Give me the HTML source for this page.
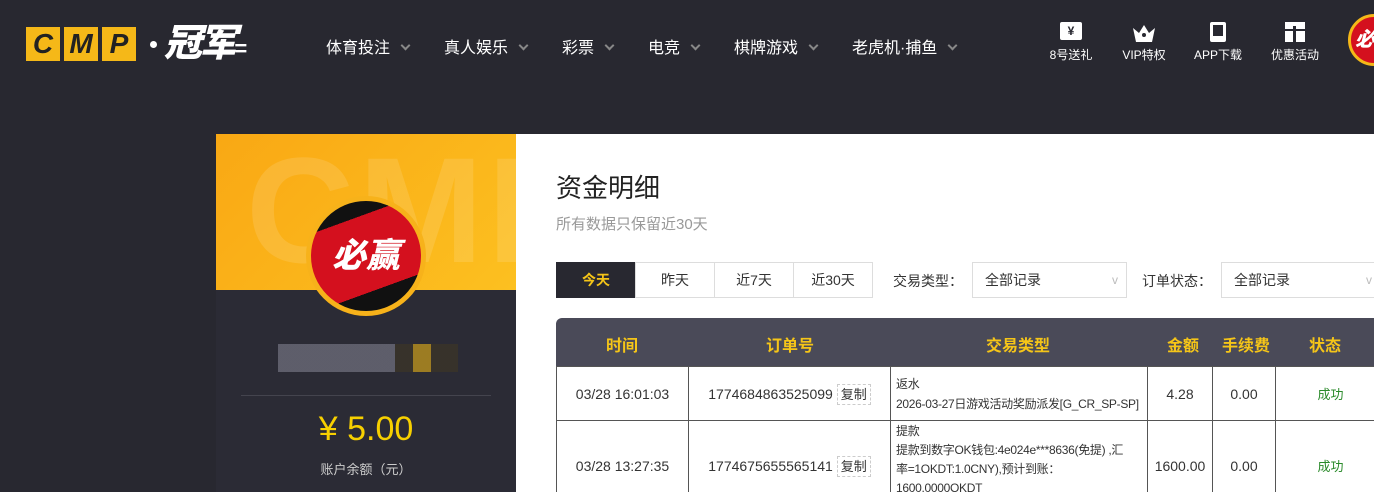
<!DOCTYPE html>
<html style="width:1374px;height:492px;overflow:hidden"><head><meta charset="utf-8"><style>
*{margin:0;padding:0;box-sizing:border-box}
body{width:1374px;height:492px;overflow:hidden;background:#282830;font-family:"Liberation Sans","Noto Sans CJK SC",sans-serif;position:relative}
.abs{position:absolute}
.nav{top:34px;color:#fff;font-size:16px}
.nav span{position:absolute;white-space:nowrap}
.nav span:after{content:"";display:inline-block;width:5px;height:5px;border-right:2px solid #888;border-bottom:2px solid #888;transform:rotate(45deg);margin-left:12px;position:relative;top:-4px}
.ic{color:#fff;font-size:12px;text-align:center;width:70px}
.logo b{display:inline-block;width:34px;height:34px;background:#f5b818;color:#222;font-style:italic;font-size:28px;font-weight:900;text-align:center;line-height:34px;margin-right:4px}
table{border-collapse:collapse;font-size:14px;color:#333;table-layout:fixed}
td{border:1px solid #555;text-align:center;overflow:hidden}
.tab{position:absolute;top:262px;height:36px;border:1px solid #ddd;font-size:14px;color:#333;text-align:center;line-height:34px}
.sel{position:absolute;top:262px;height:36px;border:1px solid #ddd;font-size:14px;color:#333;line-height:34px;padding-left:12px}
.sel:after{content:"v";position:absolute;right:8px;color:#bbb;font-size:12px}
.d{text-align:left;padding-left:5px;font-size:12px;letter-spacing:-0.3px;white-space:nowrap}
</style></head><body>
<div class="abs logo" style="left:26px;top:27px;height:34px">
<b>C</b><b>M</b><b>P</b>
</div>
<div class="abs" style="left:150px;top:41px;width:7px;height:7px;border-radius:50%;background:#fff"></div>
<div class="abs" style="left:164px;top:20px;color:#fff;font-size:38px;font-weight:900;font-style:italic;letter-spacing:-3px;line-height:48px">冠军<span style="font-size:22px">=</span></div>
<div class="abs nav" style="left:0;width:1000px">
<span style="left:326px">体育投注</span><span style="left:444px">真人娱乐</span><span style="left:562px">彩票</span><span style="left:648px">电竞</span><span style="left:734px">棋牌游戏</span><span style="left:852px">老虎机·捕鱼</span>
</div>
<div class="abs ic" style="left:1036px;top:22px"><div style="margin:0 auto 6px;width:22px;height:18px;background:#fff;border-radius:2px;color:#282830;font-size:12px;font-weight:bold;line-height:18px">¥</div>8号送礼</div>
<div class="abs ic" style="left:1109px;top:22px"><svg width="26" height="22" viewBox="0 0 26 22" style="display:block;margin:0 auto 2px"><path d="M2 6 L8 11 L13 3 L18 11 L24 6 L21 20 L5 20 Z" fill="#fff"/><circle cx="13" cy="13" r="2" fill="#282830"/></svg>VIP特权</div>
<div class="abs ic" style="left:1183px;top:22px"><div style="margin:0 auto 4px;width:16px;height:20px;border:3px solid #fff;border-bottom-width:6px;border-radius:2px"></div>APP下载</div>
<div class="abs ic" style="left:1260px;top:22px"><div style="margin:0 auto 4px;width:20px;height:20px;background:#fff;border-top:4px solid #fff;position:relative"><div style="position:absolute;left:8px;top:0;width:3px;height:20px;background:#282830"></div><div style="position:absolute;left:0;top:3px;width:20px;height:2px;background:#282830"></div></div>优惠活动</div>
<div class="abs" style="left:1348px;top:14px;width:52px;height:52px;border-radius:50%;background:#d4101e;border:3px solid #f5b818;color:#fff;font-weight:900;font-size:20px;line-height:46px;padding-left:4px;font-style:italic">必</div>

<div class="abs" style="left:216px;top:134px;width:300px;height:156px;background:linear-gradient(135deg,#f9a814,#fcc020);overflow:hidden"><div style="position:absolute;left:30px;top:-10px;font-size:150px;font-weight:bold;color:rgba(255,255,255,.12);letter-spacing:4px">CMP</div></div>
<div class="abs" style="left:216px;top:290px;width:300px;height:202px;background:#2b2b35"></div>
<div class="abs" style="left:306px;top:196px;width:120px;height:120px;border-radius:50%;background:#f7b21a;padding:5px"><div style="width:110px;height:110px;border-radius:50%;background:linear-gradient(160deg,#111 0 22%,#d4101e 22% 75%,#111 75%);color:#fff;font-size:34px;font-weight:900;font-style:italic;text-align:center;line-height:110px">必赢</div></div>
<div class="abs" style="left:278px;top:344px;width:180px;height:28px;background:linear-gradient(90deg,#6a6a78 0 65%,#3a3428 65% 75%,#b8901e 75% 85%,#3a3428 85%);opacity:.8"></div>
<div class="abs" style="left:241px;top:395px;width:250px;height:1px;background:#44444e"></div>
<div class="abs" style="left:216px;top:410px;width:300px;text-align:center;color:#f7d000;font-size:34px">¥ 5.00</div>
<div class="abs" style="left:216px;top:459px;width:300px;text-align:center;color:#ccc;font-size:13px">账户余额（元）</div>

<div class="abs" style="left:516px;top:134px;width:858px;height:358px;background:#fff;overflow:hidden">
<div class="abs" style="left:40px;top:34px;font-size:26px;color:#222">资金明细</div>
<div class="abs" style="left:40px;top:79px;font-size:15px;color:#999">所有数据只保留近30天</div>
<div class="abs" style="left:40px;top:184px;width:830px;height:48px;background:#4a4a58;border-radius:6px 6px 0 0"></div>
<div class="abs" style="left:40px;top:198px;width:830px;color:#f5c518;font-weight:bold;font-size:16px;height:20px">
<span class="abs" style="left:50px">时间</span><span class="abs" style="left:210px">订单号</span><span class="abs" style="left:430px">交易类型</span><span class="abs" style="left:611px">金额</span><span class="abs" style="left:666px">手续费</span><span class="abs" style="left:753px">状态</span></div>
<table class="abs" style="left:40px;top:232px;width:830px">
<tr style="height:54px"><td style="width:132px">03/28 16:01:03</td><td style="width:202px">1774684863525099 <span style="border:1px dashed #ccc;padding:2px 3px;font-size:13px">复制</span></td><td class="d" style="width:257px;line-height:20px">返水<br>2026-03-27日游戏活动奖励派发[G_CR_SP-SP]</td><td style="width:65px">4.28</td><td style="width:63px">0.00</td><td style="color:#2a8a2a;font-size:13px">成功</td></tr>
<tr style="height:90px"><td>03/28 13:27:35</td><td>1774675655565141 <span style="border:1px dashed #ccc;padding:2px 3px;font-size:13px">复制</span></td><td class="d" style="line-height:19px;vertical-align:top;padding-top:1px">提款<br>提款到数字OK钱包:4e024e***8636(免提) ,汇<br>率=1OKDT:1.0CNY),预计到账：<br>1600.0000OKDT</td><td>1600.00</td><td>0.00</td><td style="color:#2a8a2a;font-size:13px">成功</td></tr>
</table>
</div>
<div class="tab" style="left:556px;width:80px;background:#282830;color:#f5c518;border-color:#282830;font-weight:bold">今天</div>
<div class="tab" style="left:635px;width:80px">昨天</div>
<div class="tab" style="left:714px;width:80px">近7天</div>
<div class="tab" style="left:793px;width:80px">近30天</div>
<div class="abs" style="left:893px;top:271px;font-size:14px;color:#333">交易类型：</div>
<div class="sel" style="left:972px;width:155px">全部记录</div>
<div class="abs" style="left:1142px;top:271px;font-size:14px;color:#333">订单状态：</div>
<div class="sel" style="left:1221px;width:160px">全部记录</div>
</body></html>
